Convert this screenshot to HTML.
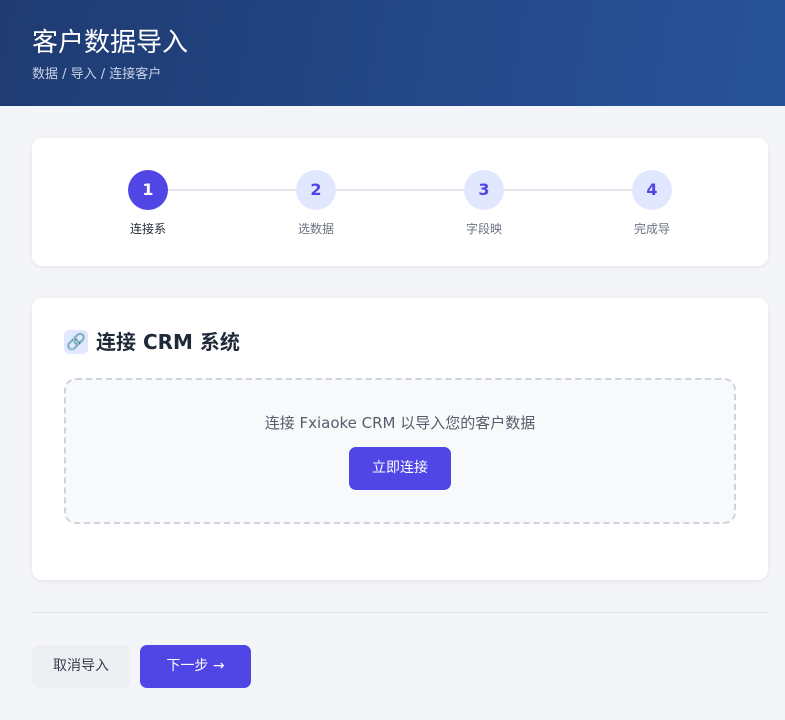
<!DOCTYPE html>
<html><head><meta charset="utf-8"><style>
*{margin:0;padding:0;box-sizing:border-box}
body{width:785px;height:720px;background:#f4f5f9;font-family:"DejaVu Sans","Liberation Sans","Noto Sans CJK SC",sans-serif;overflow:hidden;position:relative}
.hd{position:absolute;left:0;top:0;width:785px;height:106px;background:linear-gradient(100deg,#1f3b72,#28539a)}
.hd h1{position:absolute;left:32px;top:26px;font-size:26px;font-weight:normal;color:#fff;line-height:34px}
.hd p{position:absolute;left:32px;top:66px;font-size:13px;color:#c9d3e6;line-height:18px}
.card{position:absolute;left:32px;width:736px;background:#fff;border-radius:10px;box-shadow:0 1px 4px rgba(0,0,0,.08)}
.line{position:absolute;top:51px;left:116px;width:504px;height:2px;background:#e4e6ee}
.st{position:absolute;top:32px;width:80px;margin-left:-40px;text-align:center}
.c{width:40px;height:40px;border-radius:50%;margin:0 auto;background:#e0e7ff;color:#4f46e5;font-weight:bold;font-size:16px;line-height:40px}
.st span{display:block;margin-top:10px;font-size:12px;color:#6b7280}
.btn{position:absolute;border-radius:7px;font-size:14px;text-align:center;line-height:43px;height:43px}
</style></head><body>
<div class="hd"><h1>客户数据导入</h1><p>数据 / 导入 / 连接客户</p></div>
<div class="card" style="top:138px;height:128px">
<div class="line"></div>
<div class="st" style="left:116px"><div class="c" style="background:#4f46e5;color:#fff">1</div><span style="color:#1f2937">连接系</span></div>
<div class="st" style="left:284px"><div class="c">2</div><span>选数据</span></div>
<div class="st" style="left:452px"><div class="c">3</div><span>字段映</span></div>
<div class="st" style="left:620px"><div class="c">4</div><span>完成导</span></div>
</div>
<div class="card" style="top:298px;height:282px">
<div style="position:absolute;left:32px;top:32px;width:24px;height:24px;border-radius:5px;background:#e0e7ff;color:#4f46e5;text-align:center;line-height:24px;font-size:16px">🔗</div>
<div style="position:absolute;left:64px;top:30px;font-size:20px;font-weight:bold;color:#1f2937;line-height:28px">连接 CRM 系统</div>
<div style="position:absolute;left:32px;top:80px;width:672px;height:146px;border:2px dashed #cfd3dd;border-radius:12px;background:#f8f9fb">
<div style="position:absolute;top:32px;width:100%;text-align:center;font-size:15px;color:#555d6b">连接 Fxiaoke CRM 以导入您的客户数据</div>
<div class="btn" style="left:283px;top:67px;width:102px;background:#4f46e5;color:#fff">立即连接</div>
</div></div>
<div style="position:absolute;left:32px;top:612px;width:736px;height:1px;background:#e0e2e8"></div>
<div class="btn" style="left:32px;top:645px;width:98px;background:#eeeff2;color:#374151">取消导入</div>
<div class="btn" style="left:140px;top:645px;width:111px;background:#4f46e5;color:#fff">下一步 →</div>
</body></html>
